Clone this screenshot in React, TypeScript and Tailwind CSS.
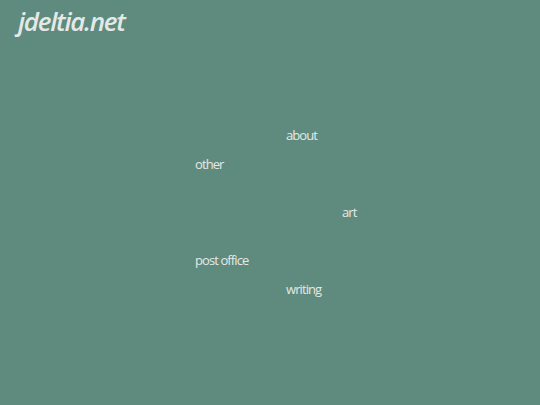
export default function App() {
  const links = [
    { label: "about", indent: "ml-[91px]", gap: "" },
    { label: "other", indent: "", gap: "mt-[13px]" },
    { label: "art", indent: "ml-[147px]", gap: "mt-[32px]" },
    { label: "post office", indent: "", gap: "mt-[32px]" },
    { label: "writing", indent: "ml-[91px]", gap: "mt-[13px]" },
  ];

  return (
    <div className="min-h-[405px] w-full bg-[#5e8b7e] text-[#e4e9e7]" style={{ fontFamily: '"Open Sans", sans-serif' }}>
      <header className="px-[18px] pt-[4px]">
        <a href="#" className="block text-[26px] font-semibold italic leading-[34px] tracking-[-0.05em]">
          jdeltia.net
        </a>
      </header>
      <nav className="ml-[195px] mt-[89px] flex flex-col items-start">
        {links.map((l) => (
          <a key={l.label} href="#" className={`block text-[13px] leading-[16px] tracking-[-0.07em] ${l.indent} ${l.gap}`}>
            {l.label}
          </a>
        ))}
      </nav>
    </div>
  );
}
